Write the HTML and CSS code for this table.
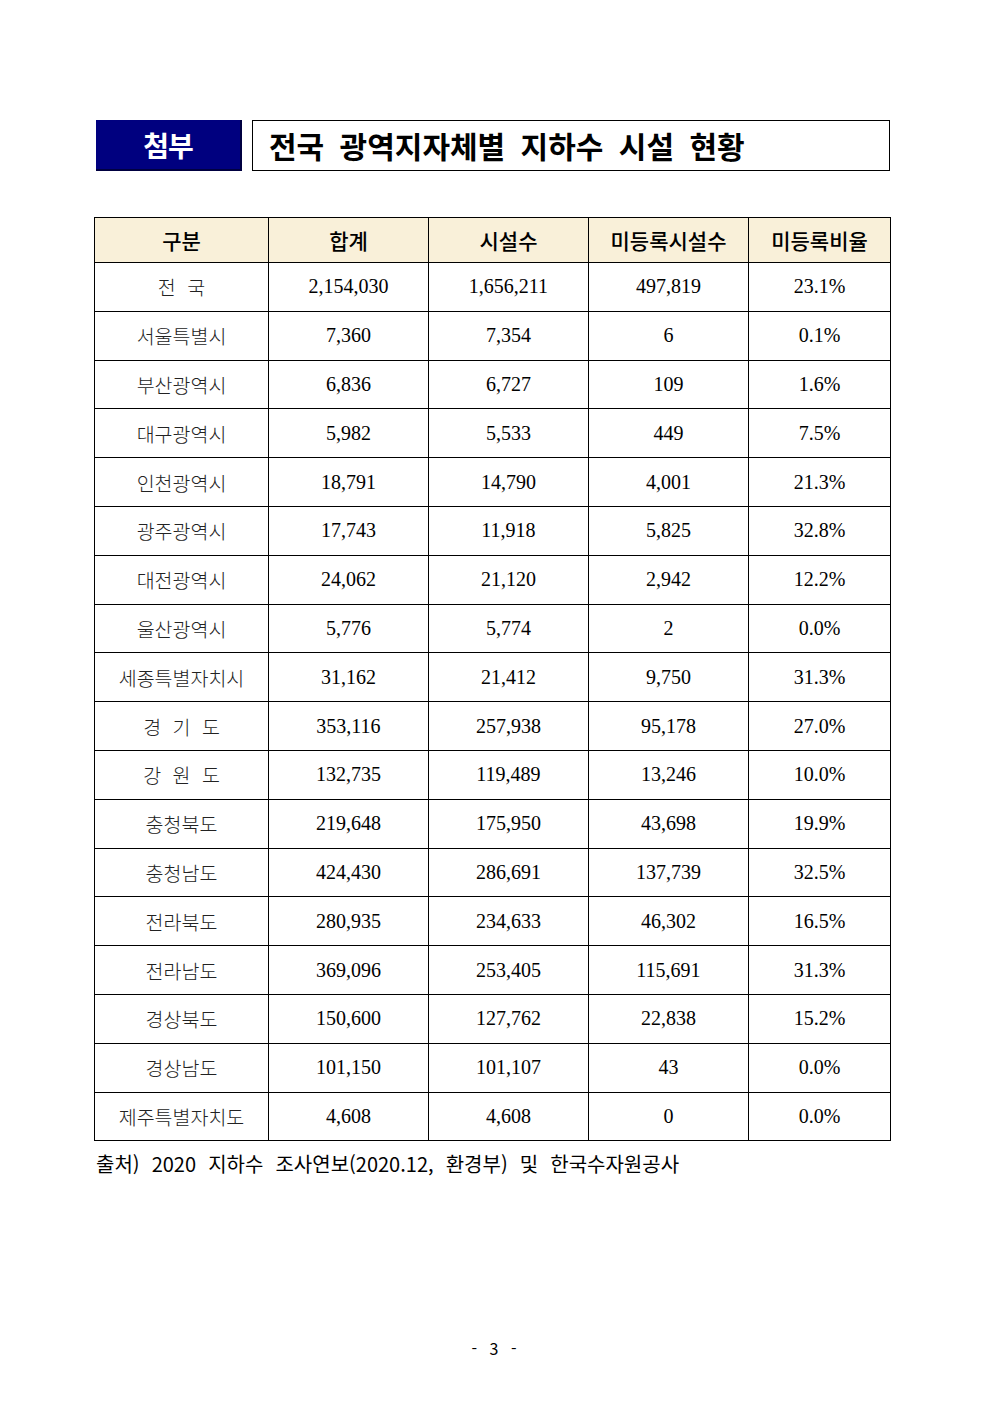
FILE: index.html
```html
<!DOCTYPE html>
<html lang="ko">
<head>
<meta charset="utf-8">
<link rel="stylesheet" href="styles.css">
</head>
<body>
<div class="page">
  <div class="heading">
    <div class="tag">첨부</div>
    <div class="title">전국 광역지자체별 지하수 시설 현황</div>
  </div>
  <table class="data">
    <thead>
      <tr><th class="c1">구분</th><th class="c2">합계</th><th class="c3">시설수</th><th class="c4">미등록시설수</th><th class="c5">미등록비율</th></tr>
    </thead>
    <tbody>
      <tr><td class="lbl">전 국</td><td>2,154,030</td><td>1,656,211</td><td>497,819</td><td>23.1%</td></tr>
      <tr><td class="lbl">서울특별시</td><td>7,360</td><td>7,354</td><td>6</td><td>0.1%</td></tr>
      <tr><td class="lbl">부산광역시</td><td>6,836</td><td>6,727</td><td>109</td><td>1.6%</td></tr>
      <tr><td class="lbl">대구광역시</td><td>5,982</td><td>5,533</td><td>449</td><td>7.5%</td></tr>
      <tr><td class="lbl">인천광역시</td><td>18,791</td><td>14,790</td><td>4,001</td><td>21.3%</td></tr>
      <tr><td class="lbl">광주광역시</td><td>17,743</td><td>11,918</td><td>5,825</td><td>32.8%</td></tr>
      <tr><td class="lbl">대전광역시</td><td>24,062</td><td>21,120</td><td>2,942</td><td>12.2%</td></tr>
      <tr><td class="lbl">울산광역시</td><td>5,776</td><td>5,774</td><td>2</td><td>0.0%</td></tr>
      <tr><td class="lbl">세종특별자치시</td><td>31,162</td><td>21,412</td><td>9,750</td><td>31.3%</td></tr>
      <tr><td class="lbl">경 기 도</td><td>353,116</td><td>257,938</td><td>95,178</td><td>27.0%</td></tr>
      <tr><td class="lbl">강 원 도</td><td>132,735</td><td>119,489</td><td>13,246</td><td>10.0%</td></tr>
      <tr><td class="lbl">충청북도</td><td>219,648</td><td>175,950</td><td>43,698</td><td>19.9%</td></tr>
      <tr><td class="lbl">충청남도</td><td>424,430</td><td>286,691</td><td>137,739</td><td>32.5%</td></tr>
      <tr><td class="lbl">전라북도</td><td>280,935</td><td>234,633</td><td>46,302</td><td>16.5%</td></tr>
      <tr><td class="lbl">전라남도</td><td>369,096</td><td>253,405</td><td>115,691</td><td>31.3%</td></tr>
      <tr><td class="lbl">경상북도</td><td>150,600</td><td>127,762</td><td>22,838</td><td>15.2%</td></tr>
      <tr><td class="lbl">경상남도</td><td>101,150</td><td>101,107</td><td>43</td><td>0.0%</td></tr>
      <tr><td class="lbl">제주특별자치도</td><td>4,608</td><td>4,608</td><td>0</td><td>0.0%</td></tr>
    </tbody>
  </table>
  <p class="source">출처) 2020 지하수 조사연보(2020.12, 환경부) 및 한국수자원공사</p>
  <div class="pageno">- 3 -</div>
</div>
</body>
</html>
```

FILE: styles.css
```css
html, body {
  margin: 0;
  padding: 0;
  background: #ffffff;
}

.page {
  width: 992px;
  padding-top: 120px;
  padding-left: 94px;
  box-sizing: border-box;
  font-family: "Liberation Serif", "Noto Sans CJK KR", serif;
  color: #000;
}

.heading {
  display: flex;
  gap: 10px;
  margin-left: 2px;
  width: 794px;
  height: 51px;
}

.tag {
  width: 146px;
  height: 51px;
  box-sizing: border-box;
  background: #00007f;
  border-right: 2px solid #000040;
  border-bottom: 2px solid #000040;
  color: #fff;
  font-family: "Noto Sans CJK KR", sans-serif;
  font-weight: 700;
  font-size: 28px;
  letter-spacing: -1px;
  display: flex;
  align-items: center;
  justify-content: center;
  padding-top: 1px;
}

.title {
  flex: 1;
  border: 1px solid #000;
  box-sizing: border-box;
  font-family: "Noto Sans CJK KR", sans-serif;
  font-weight: 700;
  font-size: 30px;
  letter-spacing: 0;
  word-spacing: 7px;
  display: flex;
  align-items: center;
  padding-left: 16px;
  padding-bottom: 2px;
}

.data {
  margin-top: 46px;
  border-collapse: collapse;
  width: 796px;
  table-layout: fixed;
}

.data th, .data td {
  border: 1px solid #000;
  text-align: center;
  padding: 0;
}

.data th {
  background: #f9f0d9;
  height: 44px;
  font-size: 21px;
  font-weight: 500;
  font-family: "Noto Sans CJK KR", serif;
}

.data td {
  height: 47.8px;
  font-size: 20px;
}

.data td.lbl {
  font-family: "Noto Sans CJK KR", serif;
  font-size: 19.5px;
  font-weight: 300;
  color: #222;
  word-spacing: 6px;
}

.c1 { width: 173px; }
.c2 { width: 159px; }
.c3 { width: 159px; }
.c4 { width: 159px; }
.c5 { width: 141px; }

.source {
  margin: 8px 0 0 2px;
  font-family: "Noto Sans CJK KR", sans-serif;
  font-size: 20px;
  word-spacing: 6.5px;
}

.pageno {
  margin-top: 158px;
  width: 800px;
  text-align: center;
  font-family: "Noto Sans CJK KR", sans-serif;
  font-size: 16px;
  word-spacing: 8px;
}
```
